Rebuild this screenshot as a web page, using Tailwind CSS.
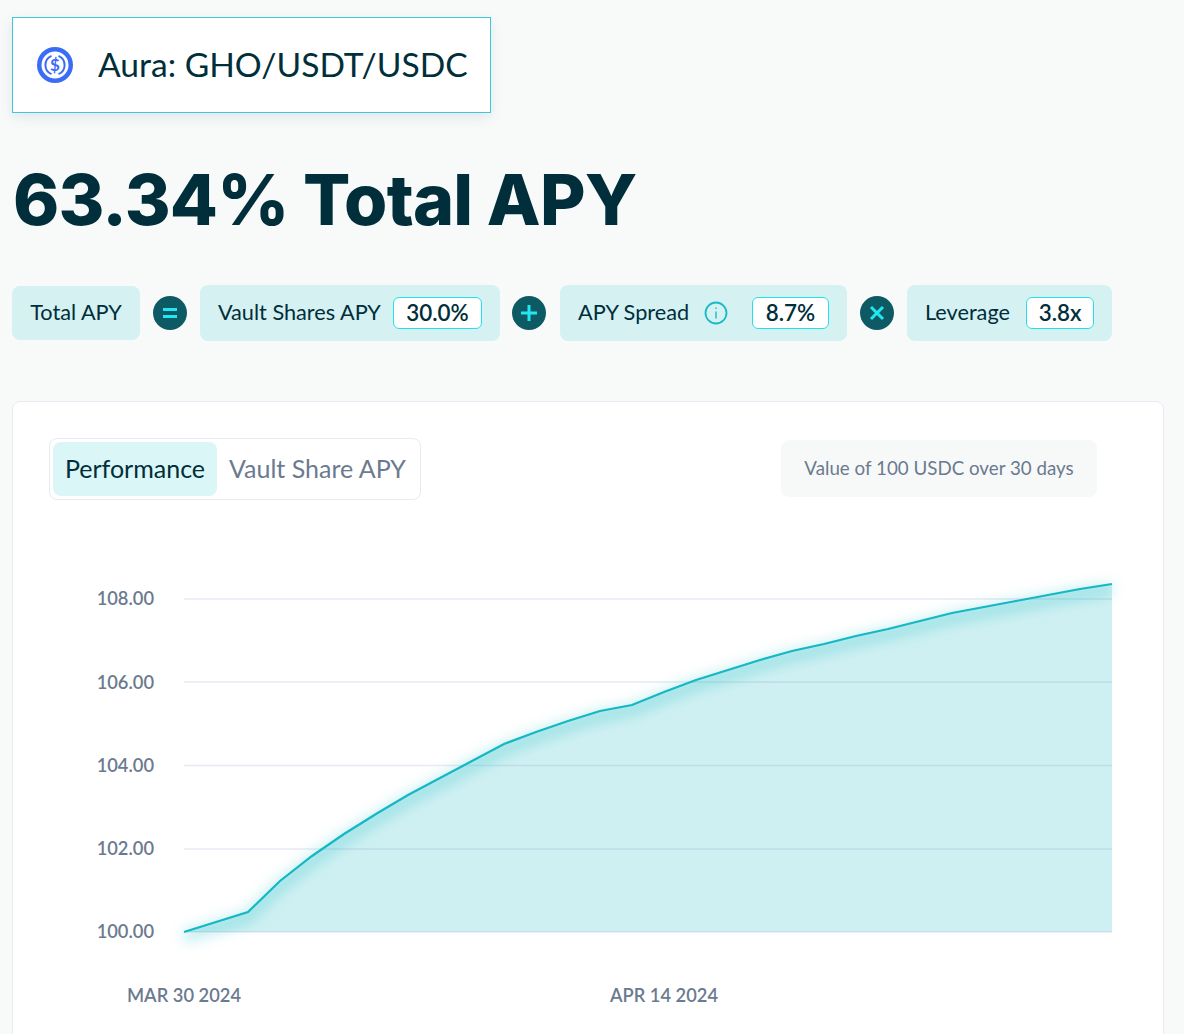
<!DOCTYPE html>
<html lang="en">
<head>
    <meta charset="UTF-8">
    <title>Aura: GHO/USDT/USDC</title>
    <script src="https://cdn.jsdelivr.net/npm/@tailwindcss/browser@4"></script>
</head>
<body class="bg-[#f8fafa] h-[1034px] overflow-hidden font-['Lato','Open_Sans',sans-serif] text-[#002e3a]">
    <div class="pl-3 pt-[17px] w-[1164px]">
        <!-- Vault title -->
        <div class="w-[479px] h-[96px] bg-white border border-[#3fc8dc] shadow-[0_4px_12px_rgba(0,60,80,0.10)] flex items-center pl-6">
            <svg class="w-9 h-9 shrink-0" viewBox="0 0 36 36" fill="none">
                <circle cx="18" cy="18" r="18" fill="#3b6cf6"/>
                <circle cx="18" cy="18" r="13.500" fill="#fff"/>
                <path d="M14.500 8.800A10 10 0 0 0 14.500 27.200M21.500 8.800A10 10 0 0 1 21.500 27.200" stroke="#3b6cf6" stroke-width="2"/>
                <text x="18" y="24" text-anchor="middle" font-size="17" font-weight="700" fill="#3b6cf6">$</text>
            </svg>
            <span class="ml-[25px] text-[33.600px] leading-none">Aura: GHO/USDT/USDC</span>
        </div>

        <h1 class="mt-[41px] mb-[39px] pl-px text-[70px] leading-[92px] font-extrabold font-['Inter',sans-serif] tracking-[-0.8px]">63.34% Total APY</h1>

        <!-- APY formula -->
        <div class="flex items-center gap-[13px] text-[21.700px] h-[56px]">
            <div class="w-[128px] h-[54px] bg-[#d5f1f2] rounded-lg flex items-center justify-center"><span class="-translate-y-px">Total APY</span></div>
            <div class="w-[34px] h-[34px] rounded-full bg-[#0d5a64] flex items-center justify-center">
                <svg class="w-5 h-5" viewBox="0 0 20 20" stroke="#24e6f0" stroke-width="3"><path d="M3 6.500h14M3 13.500h14"/></svg>
            </div>
            <div class="w-[300px] h-[56px] bg-[#d5f1f2] rounded-lg flex items-center justify-between pl-[18px] pr-[18px]">
                <span class="-translate-y-px">Vault Shares APY</span>
                <span class="w-[89px] h-[32px] bg-white border border-[#24e0ea] rounded-md flex items-center justify-center font-semibold text-[22.400px]">30.0%</span>
            </div>
            <div class="-ml-px w-[34px] h-[34px] rounded-full bg-[#0d5a64] flex items-center justify-center">
                <svg class="w-5 h-5" viewBox="0 0 20 20" stroke="#24e6f0" stroke-width="3"><path d="M2 10h16M10 2v16"/></svg>
            </div>
            <div class="ml-px w-[287px] h-[56px] bg-[#d5f1f2] rounded-lg flex items-center pl-[18px] pr-[18px]">
                <span class="-translate-y-px">APY Spread</span>
                <svg class="ml-[15px] w-[24px] h-[24px]" viewBox="0 0 24 24" fill="none" stroke="#17bcc8" stroke-width="1.800">
                    <circle cx="12" cy="12" r="10.500"/>
                    <path d="M12 10.500v7" stroke-width="1.400"/>
                    <path d="M12 6.500v1.500" stroke-width="1.400"/>
                </svg>
                <span class="ml-auto w-[77px] h-[32px] bg-white border border-[#24e0ea] rounded-md flex items-center justify-center font-semibold text-[22.400px]">8.7%</span>
            </div>
            <div class="w-[34px] h-[34px] rounded-full bg-[#0d5a64] flex items-center justify-center">
                <svg class="w-5 h-5" viewBox="0 0 20 20" stroke="#24e6f0" stroke-width="3"><path d="M4 4l12 12M16 4L4 16"/></svg>
            </div>
            <div class="w-[205px] h-[56px] bg-[#d5f1f2] rounded-lg flex items-center justify-between pl-[18px] pr-[18px]">
                <span class="-translate-y-px">Leverage</span>
                <span class="w-[68px] h-[32px] bg-white border border-[#24e0ea] rounded-md flex items-center justify-center font-semibold text-[22.400px]">3.8x</span>
            </div>
        </div>

        <!-- Chart card -->
        <div class="mt-[60px] w-[1152px] h-[640px] bg-white border border-[#e9e9f4] rounded-lg">
            <div class="flex items-center justify-between pl-[36px] pr-[66px] pt-[36px]">
                <div class="w-[372px] h-[62px] border border-[#e9e9f4] rounded-lg p-[3px] flex items-center text-[25px]">
                    <div class="w-[164px] h-[54px] bg-[#dbf6f7] rounded-lg flex items-center justify-center">Performance</div>
                    <div class="ml-3 text-[#6b7a8f]">Vault Share APY</div>
                </div>
                <div class="mb-[2px] w-[316px] h-[57px] bg-[#f7f9f9] rounded-lg flex items-center justify-center text-[18.750px] text-[#6b7a8f]">Value of 100 USDC over 30 days</div>
            </div>

            <svg class="mt-[60px] block" width="1150" height="474" viewBox="13 560 1150 474" font-size="18.300" font-weight="600" fill="#6b7a8f">
                <defs>
                    <filter id="glow" x="-5%" y="-15%" width="110%" height="130%">
                        <feGaussianBlur stdDeviation="7"/>
                    </filter>
                </defs>
                <g stroke="#e9e9f4" stroke-width="1.500">
                    <path d="M184 599H1112M184 682H1112M184 765.500H1112M184 849H1112M184 932H1112"/>
                </g>
                <path d="M184 932L216 922 248 912 280 881 312 856 344 834 376 814 408 795 440 778 472 761 504 744 536 732 568 721 600 711 632 705 664 692 696 680 728 670 760 660 792 651 824 644 856 636 888 629 920 621 952 613 984 607 1016 601 1048 595 1080 589 1112 584V932Z" fill="#0fb5bf" fill-opacity="0.2"/>
                <path d="M184 937L216 927 248 917 280 886 312 861 344 839 376 819 408 800 440 783 472 766 504 749 536 737 568 726 600 716 632 710 664 697 696 685 728 675 760 665 792 656 824 649 856 641 888 634 920 626 952 618 984 612 1016 606 1048 600 1080 594 1112 589" fill="none" stroke="#0fb5bf" stroke-opacity="0.3" stroke-width="10" filter="url(#glow)"/>
                <path d="M184 932L216 922 248 912 280 881 312 856 344 834 376 814 408 795 440 778 472 761 504 744 536 732 568 721 600 711 632 705 664 692 696 680 728 670 760 660 792 651 824 644 856 636 888 629 920 621 952 613 984 607 1016 601 1048 595 1080 589 1112 584" fill="none" stroke="#14b8c4" stroke-width="2.200"/>
                <text x="154" y="605" text-anchor="end">108.00</text>
                <text x="154" y="689" text-anchor="end">106.00</text>
                <text x="154" y="772" text-anchor="end">104.00</text>
                <text x="154" y="855" text-anchor="end">102.00</text>
                <text x="154" y="938" text-anchor="end">100.00</text>
                <text x="184" y="1002" text-anchor="middle">MAR 30 2024</text>
                <text x="664" y="1002" text-anchor="middle">APR 14 2024</text>
            </svg>
        </div>
    </div>
</body>
</html>
